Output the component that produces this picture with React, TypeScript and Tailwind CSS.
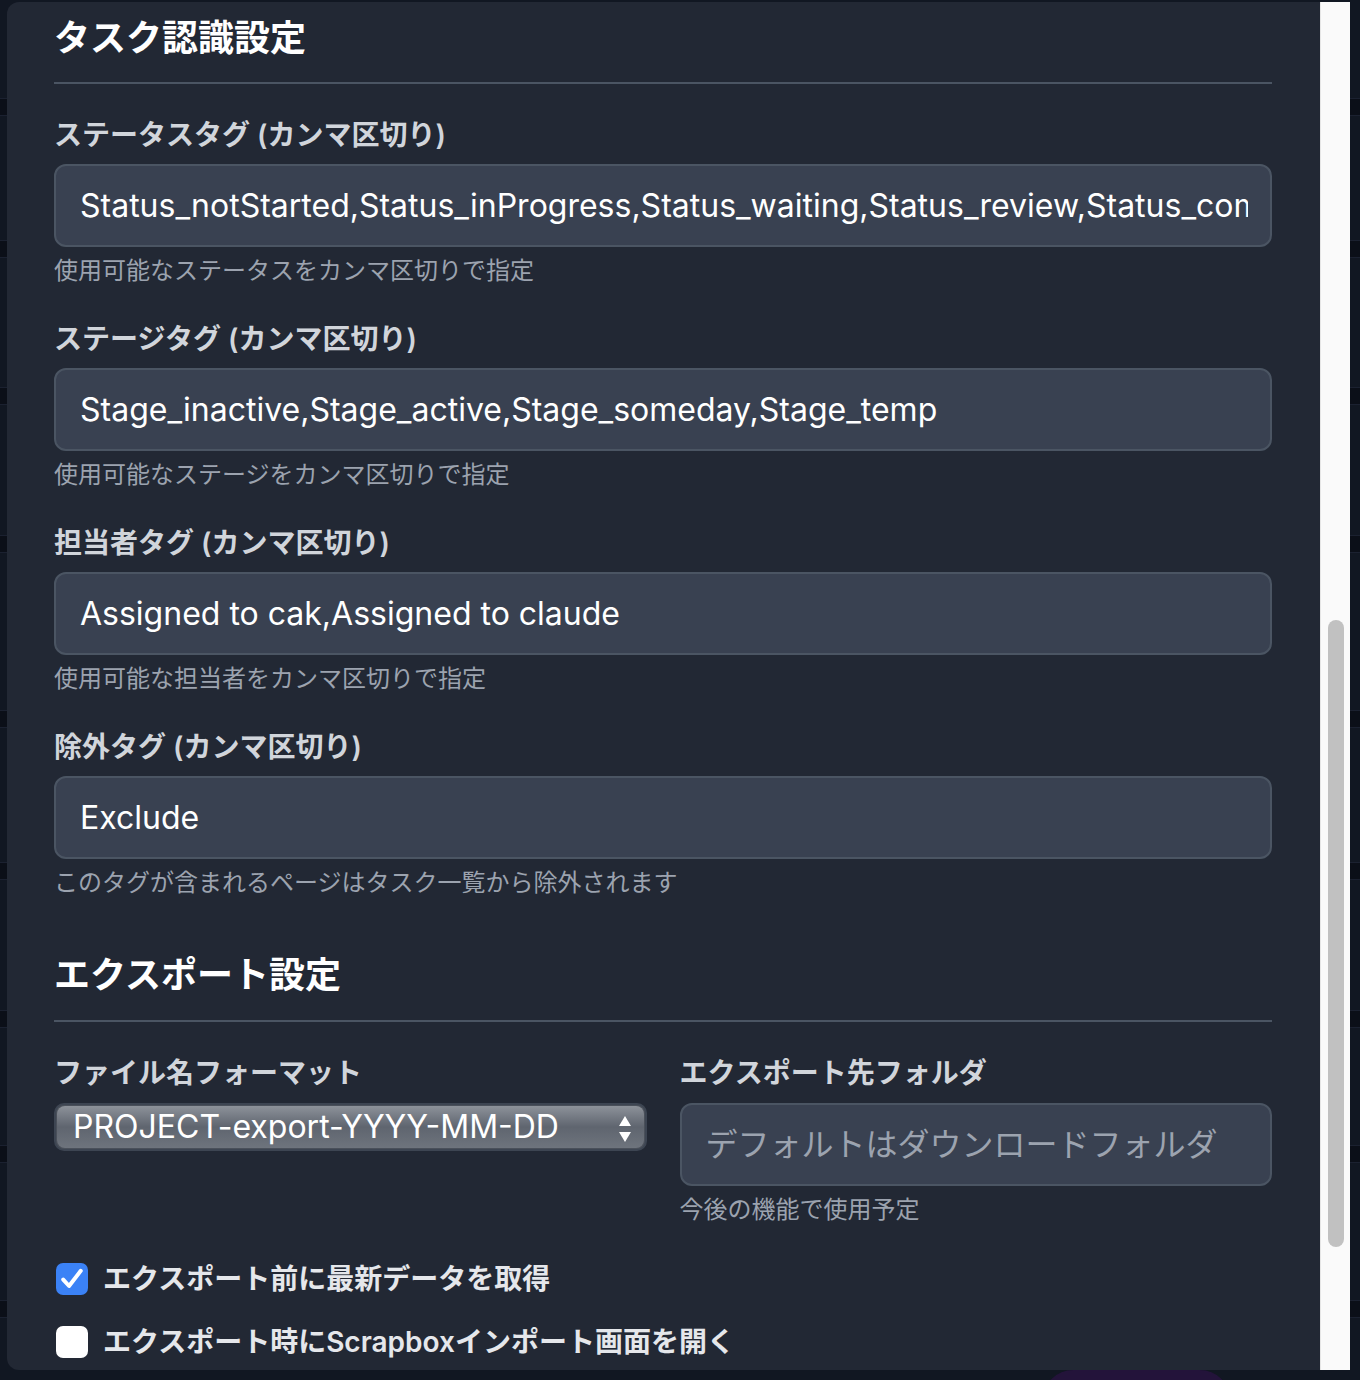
import React from "react";

const FONT = 'Inter, "Noto Sans CJK JP", "Noto Sans", sans-serif';

function Field({ label, value, help }: { label: string; value: string; help: string }) {
  return (
    <div className="flex flex-col">
      <div className="h-[40px] leading-[40px] text-[28px] font-semibold text-[#d1d5db]">{label}</div>
      <input
        readOnly
        value={value}
        className="mt-[9px] h-[83px] w-full rounded-[12px] border-2 border-[#4b5563] bg-[#394151] pl-[24px] pr-[22px] text-[32px] text-white outline-none"
        style={{ fontFamily: FONT }}
      />
      <div className="mt-[8px] h-[32px] leading-[32px] text-[24px] text-[#9ca3af]">{help}</div>
    </div>
  );
}

function SideStrip() {
  const bands = [98, 240, 387, 535, 710, 862, 1010, 1145, 1300];
  return (
    <div className="relative h-full w-full bg-[#111722]">
      {bands.map((y) => (
        <div key={y} className="absolute left-0 right-0 h-[18px] bg-[#0b0f18] border-y border-[#1b2130]" style={{ top: y }} />
      ))}
    </div>
  );
}

export default function App() {
  return (
    <div className="relative w-[1360px] h-[1380px] overflow-hidden bg-[#111722]" style={{ fontFamily: FONT }}>
      <div className="absolute left-0 top-0 h-full w-[7px]"><SideStrip /></div>
      <div className="absolute right-0 top-0 h-full w-[10px]"><SideStrip /></div>
      <div className="absolute left-[1043px] top-[1370px] h-[30px] w-[187px] rounded-t-[40px] bg-[#23133a]" />
      <div className="absolute left-[7px] top-[2px] flex h-[1368px] w-[1343px] overflow-hidden rounded-l-[12px] bg-[#222834]">
        <div className="flex-1 pl-[47px] pr-[48px] pt-[11px]">
          <div className="border-b-2 border-[#4b5563] pb-[19px]">
            <div className="h-[50px] leading-[50px] text-[36px] font-bold text-white">タスク認識設定</div>
          </div>
          <div className="mt-[31px] flex flex-col gap-[32px]">
            <Field
              label="ステータスタグ (カンマ区切り)"
              value="Status_notStarted,Status_inProgress,Status_waiting,Status_review,Status_completed"
              help="使用可能なステータスをカンマ区切りで指定"
            />
            <Field
              label="ステージタグ (カンマ区切り)"
              value="Stage_inactive,Stage_active,Stage_someday,Stage_temp"
              help="使用可能なステージをカンマ区切りで指定"
            />
            <Field
              label="担当者タグ (カンマ区切り)"
              value="Assigned to cak,Assigned to claude"
              help="使用可能な担当者をカンマ区切りで指定"
            />
            <Field label="除外タグ (カンマ区切り)" value="Exclude" help="このタグが含まれるページはタスク一覧から除外されます" />
          </div>
          <div className="mt-[51px] border-b-2 border-[#4b5563] pb-[20px]">
            <div className="h-[50px] leading-[50px] text-[36px] font-bold text-white">エクスポート設定</div>
          </div>
          <div className="mt-[31px] grid grid-cols-2 gap-x-[33px]">
            <div className="flex flex-col">
              <div className="h-[40px] leading-[40px] text-[28px] font-semibold text-[#d1d5db]">ファイル名フォーマット</div>
              <div className="mt-[10px] h-[48px] rounded-[10px] border-2 border-[#3d4552] bg-[#4a505a] p-[1px]">
                <div className="relative flex h-full items-center rounded-[8px] bg-gradient-to-b from-[#8d929a] via-[#5f656f] to-[#6e747d] pl-[16px]">
                  <span className="text-[32px] leading-none text-white">PROJECT-export-YYYY-MM-DD</span>
                  <svg className="absolute right-[12px] top-[8px]" width="14" height="30" viewBox="0 0 14 30">
                    <path d="M7 2 L13 12 L1 12 Z" fill="#fff" />
                    <path d="M1 18 L13 18 L7 28 Z" fill="#fff" />
                  </svg>
                </div>
              </div>
            </div>
            <div className="flex flex-col">
              <div className="h-[40px] leading-[40px] text-[28px] font-semibold text-[#d1d5db]">エクスポート先フォルダ</div>
              <input
                readOnly
                placeholder="デフォルトはダウンロードフォルダ"
                className="mt-[10px] h-[83px] w-full rounded-[12px] border-2 border-[#4b5563] bg-[#394151] pl-[24px] pr-[22px] text-[32px] text-white outline-none placeholder:text-[#9ca3af]"
                style={{ fontFamily: FONT }}
              />
              <div className="mt-[8px] h-[32px] leading-[32px] text-[24px] text-[#9ca3af]">今後の機能で使用予定</div>
            </div>
          </div>
          <div className="mt-[33px] flex h-[40px] items-center gap-[15px] pl-[2px]">
            <div className="flex h-[32px] w-[32px] items-center justify-center rounded-[7px] bg-[#3b82f6]">
              <svg width="28" height="28" viewBox="0 0 24 24" fill="none" stroke="#fff" strokeWidth="3.4" strokeLinecap="round" strokeLinejoin="round">
                <path d="M4.5 12.5 L9.5 18 L19.5 5" />
              </svg>
            </div>
            <span className="text-[28px] font-semibold text-[#e5e7eb]">エクスポート前に最新データを取得</span>
          </div>
          <div className="mt-[23px] flex h-[40px] items-center gap-[15px] pl-[2px]">
            <div className="h-[32px] w-[32px] rounded-[7px] bg-white" />
            <span className="text-[28px] font-semibold text-[#e5e7eb]">エクスポート時にScrapboxインポート画面を開く</span>
          </div>
        </div>
        <div className="relative h-full w-[30px] border-l border-[#e6e6e6] bg-[#fafafa]">
          <div className="absolute left-[7px] top-[618px] h-[627px] w-[16px] rounded-full bg-[#c1c1c1]" />
        </div>
      </div>
    </div>
  );
}
